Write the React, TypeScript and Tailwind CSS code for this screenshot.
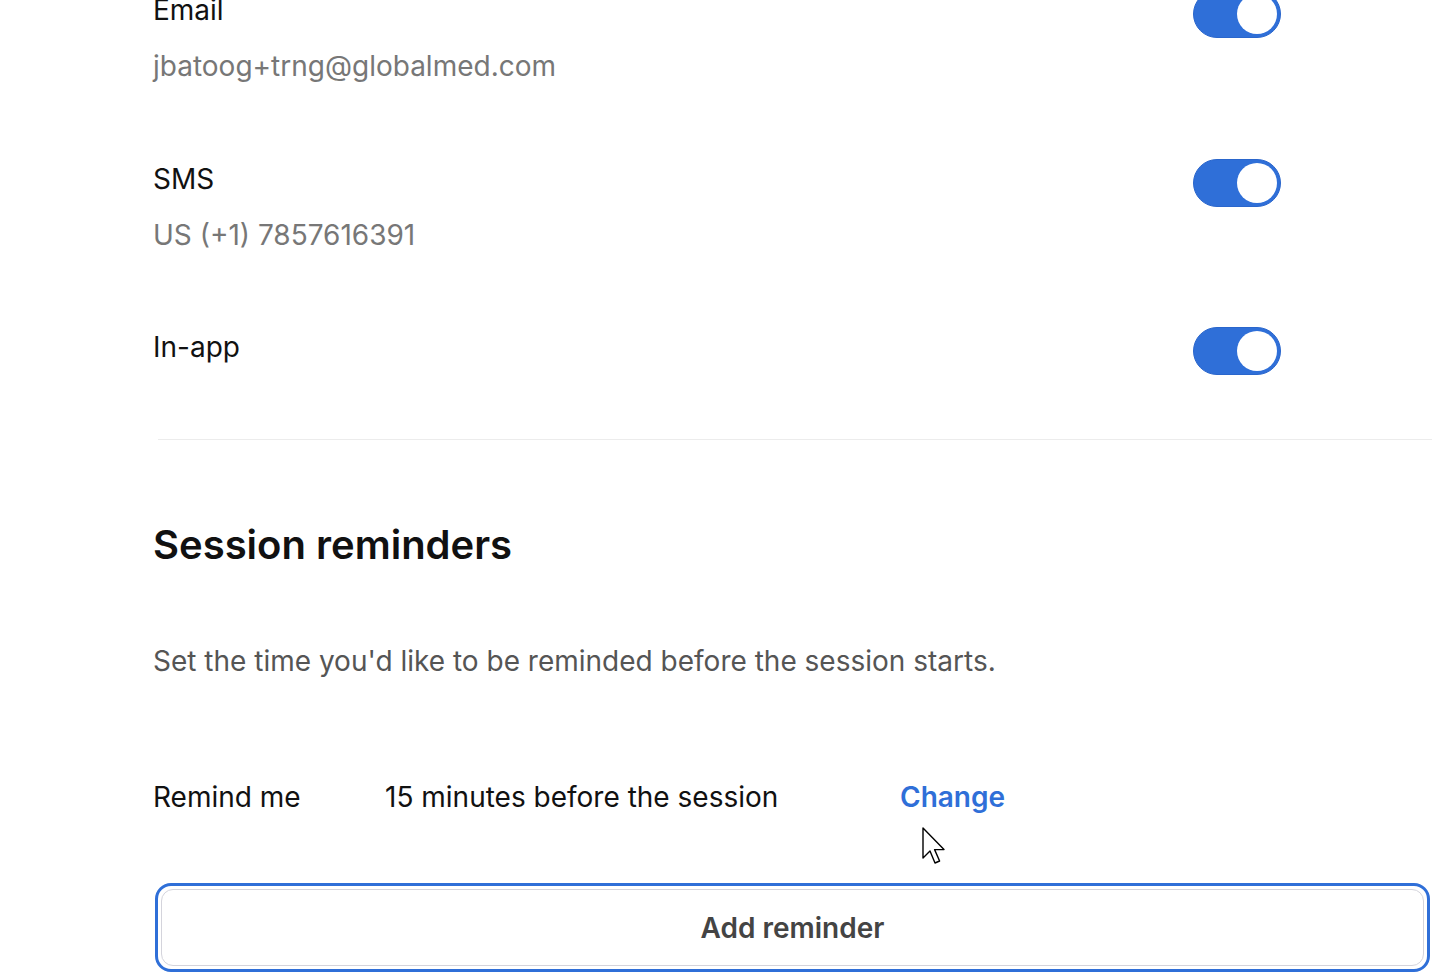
import React from 'react';

const Toggle = () => (
  <div className="w-[88px] h-[48px] rounded-full bg-[#2f6fd8] border-[1.5px] border-[#2a66cc] flex items-center justify-end pr-[3px] shrink-0">
    <div className="w-[40px] h-[40px] rounded-full bg-white" />
  </div>
);

const Channel = ({ label, value }: { label: string; value?: string }) => (
  <div className="flex items-start justify-between pr-[151px]">
    <div className="flex flex-col gap-[22px]">
      <div className="text-[28px] leading-[34px] text-[#111]">{label}</div>
      {value && <div className="text-[28px] leading-[34px] text-[#777]">{value}</div>}
    </div>
    <div className="-mt-[3px]">
      <Toggle />
    </div>
  </div>
);

const Cursor = () => (
  <svg className="absolute left-[921px] top-[826px]" width="26" height="40" viewBox="0 0 13 20">
    <path d="M1 1 L1 16 L4.5 12.5 L7 18.5 L9.3 17.5 L6.8 11.8 L11.5 11.8 Z" fill="#fff" stroke="#000" strokeWidth="0.7" strokeLinejoin="round" />
  </svg>
);

export default function App() {
  return (
    <div className="relative h-[980px] overflow-hidden bg-white" style={{ fontFamily: 'Inter, "Noto Sans", sans-serif' }}>
      <div className="pl-[153px] pr-[6px] -mt-[7px]">
        {/* Notification channels */}
        <div className="flex flex-col gap-[78.5px]">
          <Channel label="Email" value="jbatoog+trng@globalmed.com" />
          <Channel label="SMS" value="US (+1) 7857616391" />
          <Channel label="In-app" />
        </div>

        <div className="mt-[64px] ml-[5px] h-px bg-[#ececec]" />

        {/* Session reminders */}
        <h2 className="mt-[81px] text-[40px] leading-[48px] font-semibold text-[#111]">Session reminders</h2>
        <p className="mt-[75px] text-[28px] leading-[34px] text-[#555]">
          Set the time you'd like to be reminded before the session starts.
        </p>

        <div className="mt-[102px] flex items-center text-[28px] leading-[34px]">
          <span className="w-[232px] text-[#111]">Remind me</span>
          <span className="w-[515px] text-[#111]">15 minutes before the session</span>
          <button className="font-semibold text-[#2f6fd8]">Change</button>
        </div>

        <button className="mt-[69px] ml-[2px] w-[1275px] h-[89px] rounded-[16px] border-[3px] border-[#2f6fd8] p-[3px] bg-white">
          <div className="w-full h-full rounded-[12px] border border-[#d4d4dc] flex items-center justify-center text-[28px] font-semibold text-[#444]">
            Add reminder
          </div>
        </button>
      </div>
      <Cursor />
    </div>
  );
}
